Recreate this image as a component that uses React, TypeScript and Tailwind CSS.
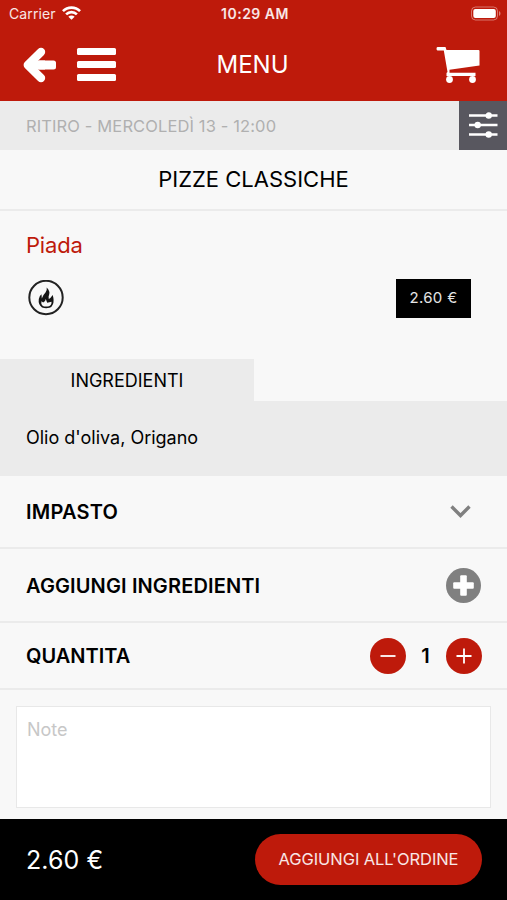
import React, { useState } from 'react';

function StatusBar() {
  return (
    <div className="flex h-7 items-center pl-[9px] pr-[6px] text-[14px] leading-none text-white/90">
      <div className="flex flex-1 items-center gap-[6px]">
        <span className="tracking-[0.1px]">Carrier</span>
        <svg width="19" height="14" viewBox="0 0 18 13" fill="none" stroke="white" strokeWidth="2.5" className="-mt-[2px]">
          <path d="M0.9 4.7a11.5 11.5 0 0 1 16.2 0" />
          <path d="M3.9 7.8a7.2 7.2 0 0 1 10.2 0" />
          <path d="M9 13L6 10a4.3 4.3 0 0 1 6 0z" fill="white" stroke="none" />
        </svg>
      </div>
      <span className="font-semibold tracking-[0.5px]">10:29 AM</span>
      <div className="flex flex-1 justify-end">
        <svg width="31" height="15" viewBox="0 0 31 15" className="-mt-[2px]">
          <rect x="1.5" y="1" width="26" height="13" rx="4" fill="none" stroke="white" strokeOpacity="0.4" />
          <rect x="3.3" y="3" width="22.5" height="9" rx="2" fill="white" />
          <path d="M29 5c2 1 2 4 0 5z" fill="white" fillOpacity="0.45" />
        </svg>
      </div>
    </div>
  );
}

function Header() {
  return (
    <header className="h-[101px] shrink-0 bg-[#be1a0b] text-white">
      <StatusBar />
      <div className="flex h-[73px] items-center pl-[23px] pr-[27px]">
        <div className="flex flex-1 items-center gap-[21px]">
          <button type="button" aria-label="Indietro">
            <svg width="33" height="36" viewBox="0 0 33 36" fill="none" stroke="white" strokeLinejoin="round">
              <path d="M18 5L4.8 18L18 31" strokeWidth="8.4" strokeLinecap="round" />
              <path d="M6 18H22" strokeWidth="9" />
              <rect x="14" y="13.5" width="19" height="9" rx="2.5" fill="white" stroke="none" />
            </svg>
          </button>
          <button type="button" aria-label="Menu" className="flex flex-col gap-[6px]">
            <span className="h-[7px] w-[39px] rounded-[1.5px] bg-white"></span>
            <span className="h-[7px] w-[39px] rounded-[1.5px] bg-white"></span>
            <span className="h-[7px] w-[39px] rounded-[1.5px] bg-white"></span>
          </button>
        </div>
        <h1 className="pl-[2px] text-[24px] leading-none">MENU</h1>
        <div className="flex flex-1 justify-end">
          <svg width="44" height="36" viewBox="0 0 44 36" fill="white">
            <path d="M1.5 0H9.5L10.5 3H42.5Q43.5 3 43.5 4V18.5L13.5 22.8V25.8H39.5V29H10.5V26L11.5 25L7.8 3.5H1.5Q0.5 3.5 0.5 1.7Q0.5 0 1.5 0z" />
            <circle cx="13.5" cy="32.5" r="3.4" />
            <circle cx="36.5" cy="32.5" r="3.4" />
          </svg>
        </div>
      </div>
    </header>
  );
}

export default function App() {
  const [quantity, setQuantity] = useState(1);

  return (
    <div className="flex h-[900px] w-[507px] flex-col overflow-hidden bg-[#f8f8f8] font-[Inter,sans-serif] text-black">
      <Header />

      {/* Pickup slot */}
      <div className="flex h-[49px] shrink-0 bg-[#ebebeb]">
        <p className="flex flex-1 items-center pl-[26px] pt-[2px] text-[16.5px] tracking-[0.12px] text-[#b0b0b0]">RITIRO - MERCOLEDÌ 13 - 12:00</p>
        <button type="button" aria-label="Filtri" className="flex w-12 items-center justify-center bg-[#58575f]">
          <svg width="30" height="26" viewBox="0 0 30 26" fill="white" stroke="white" strokeWidth="2.4" className="-mt-[1px]">
            <path d="M1 3.5H29.5M1 13H29.5M1 22.5H29.5" />
            <circle cx="20.7" cy="3.5" r="2" />
            <circle cx="9.7" cy="13" r="2" />
            <circle cx="20.7" cy="22.5" r="2" />
          </svg>
        </button>
      </div>

      <h2 className="flex h-[61px] shrink-0 items-center justify-center border-b-2 border-[#ebebeb] text-[22px]">PIZZE CLASSICHE</h2>

      {/* Product */}
      <section className="flex h-[148px] shrink-0 flex-col pl-[26px] pr-9 pt-[18px]">
        <h3 className="text-[22px] leading-8 tracking-[-0.2px] text-[#be1a0b]">Piada</h3>
        <div className="mt-[18px] flex items-center justify-between">
          <svg width="38" height="38" viewBox="0 0 38 38" fill="none">
            <circle cx="20" cy="17.5" r="16.7" stroke="#222" strokeWidth="2" />
            <path d="M16 27.5Q12 24.5 12.8 19Q13 16 15.5 14.2L15.8 18.5Q17 15 19.5 12.5Q21.3 10.3 20.7 7.5Q24.8 11 22.6 16.5L22.8 19Q24.8 18 26.7 15Q28.5 21 26.8 24.5Q25.8 27.2 23.5 27.8Q19.5 28.6 16 27.5z" fill="#151515" />
            <path d="M16.8 26Q14.6 24 15.4 21.2L17.2 22.6Q19.3 22 19.8 19L21.2 22.8L25.5 21.8Q25.8 25 23 26.2Q19.5 27 16.8 26z" fill="#f8f8f8" />
          </svg>
          <span className="flex h-[39px] w-[75px] items-center justify-center bg-black text-[15px] tracking-[0.3px] text-white/90">2.60 €</span>
        </div>
      </section>

      {/* Ingredients tab */}
      <div className="flex h-[42px] w-[254px] shrink-0 items-center justify-center bg-[#ebebeb] text-[18px]">INGREDIENTI</div>
      <div className="flex h-[75px] shrink-0 items-center bg-[#ebebeb] pb-[2px] pl-[26px] text-[18px]">Olio d'oliva, Origano</div>

      <div className="flex h-[73px] shrink-0 items-center justify-between border-b-2 border-[#ebebeb] pl-[26px] pr-9">
        <span className="text-[20px] font-semibold tracking-[0.2px]">IMPASTO</span>
        <svg width="21" height="13" viewBox="0 0 21 13" fill="none" stroke="#808080" strokeWidth="3.4">
          <path d="M1.5 1.5L10.5 10.5L19.5 1.5" />
        </svg>
      </div>

      <div className="flex h-[74px] shrink-0 items-center justify-between border-b-2 border-[#ebebeb] pl-[26px] pr-[26px]">
        <span className="pt-[2px] text-[20px] font-semibold tracking-[0.13px]">AGGIUNGI INGREDIENTI</span>
        <button type="button" aria-label="Aggiungi ingredienti">
          <svg width="35" height="35" viewBox="0 0 35 35">
            <circle cx="17.5" cy="17.5" r="17.5" fill="#808080" />
            <rect x="14.2" y="7.2" width="6.6" height="20.6" rx="1" fill="white" />
            <rect x="7.2" y="14.2" width="20.6" height="6.6" rx="1" fill="white" />
          </svg>
        </button>
      </div>

      <div className="flex h-[67px] shrink-0 items-center justify-between border-b-2 border-[#ebebeb] pl-[26px] pr-[25px]">
        <span className="text-[20px] font-semibold">QUANTITA</span>
        <div className="flex items-center">
          <button type="button" aria-label="Meno" onClick={() => setQuantity(Math.max(1, quantity - 1))}>
            <svg width="36" height="36" viewBox="0 0 36 36">
              <circle cx="18" cy="18" r="18" fill="#be1a0b" />
              <path d="M10.5 18H25.5" stroke="white" strokeWidth="1.8" />
            </svg>
          </button>
          <span className="w-10 pr-[1px] text-center text-[20px] font-semibold">{quantity}</span>
          <button type="button" aria-label="Più" onClick={() => setQuantity(quantity + 1)}>
            <svg width="36" height="36" viewBox="0 0 36 36">
              <circle cx="18" cy="18" r="18" fill="#be1a0b" />
              <path d="M10.5 18H25.5M18 10.5V25.5" stroke="white" strokeWidth="1.8" />
            </svg>
          </button>
        </div>
      </div>

      <div className="flex flex-1 px-4 pb-[11px] pt-4">
        <textarea
          placeholder="Note"
          className="w-full resize-none border border-[#e8e8e8] bg-white px-[10px] py-[11px] text-[18px] leading-6 placeholder:text-[#c7c7c7]"
        />
      </div>

      {/* Total and order button */}
      <footer className="flex h-[81px] shrink-0 items-center justify-between bg-black pl-[26px] pr-[25px] text-white">
        <span className="pt-[2px] text-[25px] tracking-[0.1px]">2.60 €</span>
        <button type="button" className="h-[51px] w-[227px] rounded-full bg-[#be1a0b] text-[16.5px] tracking-[-0.08px] text-white/90">AGGIUNGI ALL'ORDINE</button>
      </footer>
    </div>
  );
}
